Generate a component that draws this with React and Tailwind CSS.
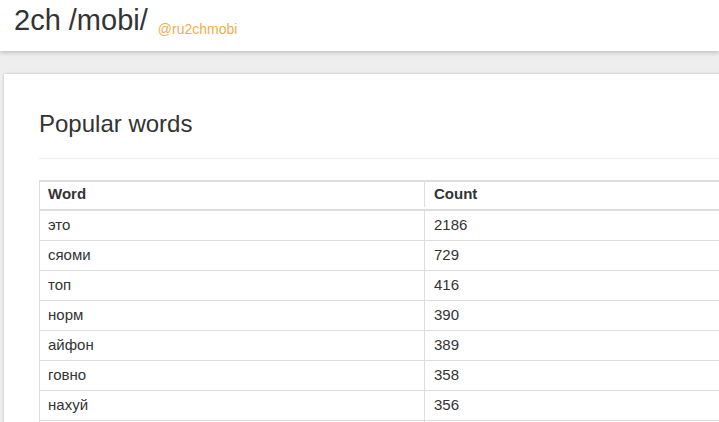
import React from 'react';

const rows = [
  ['это', '2186'],
  ['сяоми', '729'],
  ['топ', '416'],
  ['норм', '390'],
  ['айфон', '389'],
  ['говно', '358'],
  ['нахуй', '356'],
];

export default function App() {
  return (
    <div
      className="w-[719px] h-[422px] overflow-hidden bg-[#eeeeee] text-[#333333]"
      style={{ fontFamily: '"Liberation Sans", Arial, sans-serif' }}
    >
      {/* Top bar */}
      <header className="h-[51px] bg-white shadow-[0_2px_4px_rgba(0,0,0,0.18)] flex items-start pl-[14px] relative z-10">
        <h1 className="mt-[4px] text-[29px] leading-[33px] font-normal">2ch /mobi/</h1>
        <a className="ml-[10px] mt-[21px] text-[14px] leading-[16px] text-[#f0ad4e]">@ru2chmobi</a>
      </header>

      {/* Card */}
      <div className="ml-[4px] mt-[23px] w-[850px] h-[400px] bg-white shadow-[0_0_3px_rgba(0,0,0,0.2)] px-[35px] pt-[37px]">
        <h2 className="text-[24px] leading-[26px] font-normal">Popular words</h2>
        <div className="mt-[21px] h-px bg-[#eeeeee]" />

        <div className="mt-[21px] w-[770px] border-l border-r border-[#dddddd] text-[15px]">
          <div className="flex border-t-2 border-b-2 border-[#dddddd] h-[31px] pb-[2px] font-bold">
            <div className="w-[385px] border-r border-[#dddddd] pl-[8px] flex items-center">Word</div>
            <div className="flex-1 pl-[9px] flex items-center">Count</div>
          </div>
          {rows.map(([word, count]) => (
            <div key={word} className="flex border-b border-[#dddddd] h-[30px]">
              <div className="w-[385px] border-r border-[#dddddd] pl-[8px] flex items-center">{word}</div>
              <div className="flex-1 pl-[9px] flex items-center">{count}</div>
            </div>
          ))}
          {/* table continues below the fold */}
          <div className="flex h-[30px]">
            <div className="w-[385px] border-r border-[#dddddd]" />
            <div className="flex-1" />
          </div>
        </div>
      </div>
    </div>
  );
}
